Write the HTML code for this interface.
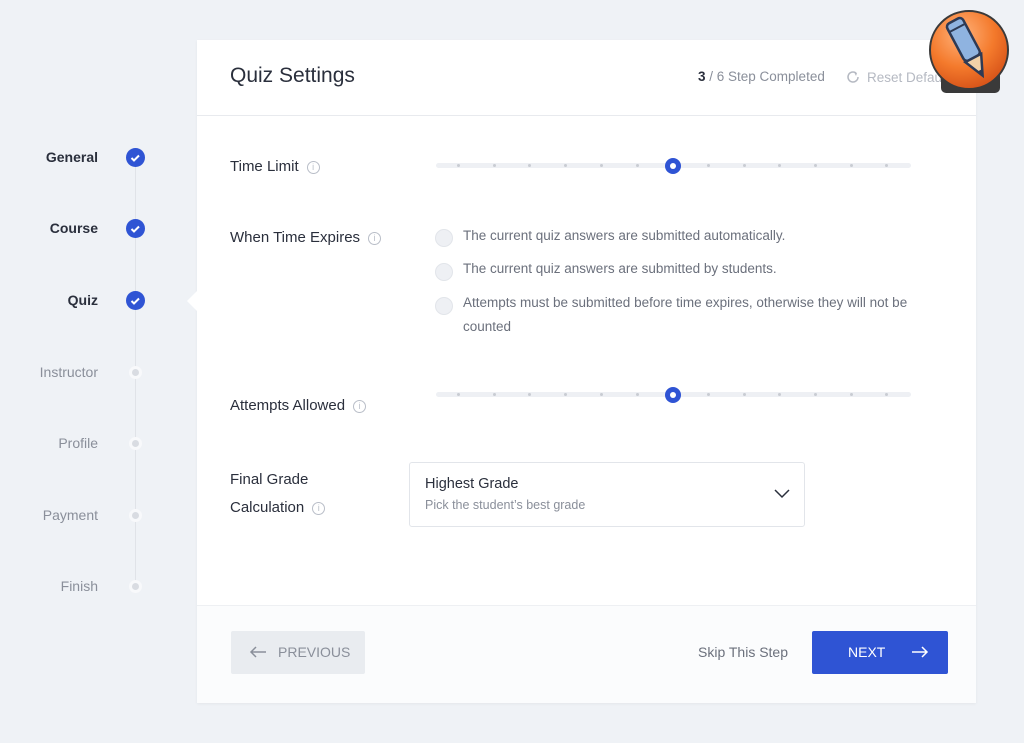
<!DOCTYPE html>
<html><head><meta charset="utf-8"><style>
*{margin:0;padding:0;box-sizing:border-box}
body{width:1024px;height:743px;background:#eff2f6;font-family:"Liberation Sans",sans-serif;position:relative;overflow:hidden}
.a{position:absolute}
.card{left:197px;top:40px;width:779px;height:663px;background:#fff;box-shadow:0 1px 3px rgba(0,0,0,.05)}
.lbl{font-size:15px;color:#2a2f3c}
.info{display:inline-block;width:13px;height:13px;border:1px solid #b9bec8;border-radius:50%;font-size:9px;color:#b9bec8;text-align:center;line-height:11px;vertical-align:1px;margin-left:8px}
.step{font-size:14px;right:926px;text-align:right;white-space:nowrap}
.dot{left:129px;width:13px;height:13px;border-radius:50%;background:#f8f9fb}
.dot:after{content:"";position:absolute;left:3px;top:3px;width:7px;height:7px;border-radius:50%;background:#d9dce2}
.track{left:436px;width:475px;height:5px;background:#eef0f4;border-radius:3px}
.tick{width:3px;height:3px;background:#c9ccd3;border-radius:50%;z-index:2}
.thumb{width:16px;height:16px;border-radius:50%;background:#2f54d4;z-index:3}
.thumb:after{content:"";position:absolute;left:5px;top:5px;width:6px;height:6px;border-radius:50%;background:#fff}
.radio{left:435px;width:18px;height:18px;border-radius:50%;background:#eef0f4;border:1px solid #e2e5ea}
.rt{left:463px;font-size:13.5px;color:#6b707c;line-height:24px}
</style></head><body>
<div class="a card"></div>
<div class="a" style="left:197px;top:115px;width:779px;height:1px;background:#e8eaee"></div>
<div class="a" style="left:197px;top:605px;width:779px;height:98px;background:#fbfcfd;border-top:1px solid #eef0f3"></div>
<div class="a" style="left:230px;top:64px;font-size:21px;color:#2a2f3c">Quiz Settings</div>
<div class="a" style="left:698px;top:69px;font-size:13.5px;color:#8a8f9a"><b style="color:#2a2f3c">3</b> / 6 Step Completed</div>
<div class="a" style="left:845px;top:69px;font-size:13.5px;color:#b5b9c2"><svg width="16" height="16" viewBox="0 0 16 16" style="vertical-align:-3px;margin-right:6px"><path d="M13 8a5 5 0 1 1-2-4" fill="none" stroke="#b5b9c2" stroke-width="1.5"/><path d="M9 3l3 1-1 3z" fill="#b5b9c2"/></svg>Reset Default</div>
<!-- sidebar -->
<div class="a" style="left:135px;top:165px;width:1px;height:425px;background:#e0e3e8"></div>
<div class="a step" style="top:149px;font-weight:bold;color:#2a2f3c">General</div>
<div class="a step" style="top:220px;font-weight:bold;color:#2a2f3c">Course</div>
<div class="a step" style="top:292px;font-weight:bold;color:#2a2f3c">Quiz</div>
<div class="a step" style="top:364px;color:#8a8f9a">Instructor</div>
<div class="a step" style="top:435px;color:#8a8f9a">Profile</div>
<div class="a step" style="top:507px;color:#8a8f9a">Payment</div>
<div class="a step" style="top:578px;color:#8a8f9a">Finish</div>
<svg class="a" style="left:126px;top:148px" width="19" height="19"><circle cx="9.5" cy="9.5" r="9.5" fill="#2f54d4"/><path d="M5.5 10l2.5 2.5 5-5" stroke="#fff" stroke-width="2" fill="none"/></svg>
<svg class="a" style="left:126px;top:219px" width="19" height="19"><circle cx="9.5" cy="9.5" r="9.5" fill="#2f54d4"/><path d="M5.5 10l2.5 2.5 5-5" stroke="#fff" stroke-width="2" fill="none"/></svg>
<svg class="a" style="left:126px;top:291px" width="19" height="19"><circle cx="9.5" cy="9.5" r="9.5" fill="#2f54d4"/><path d="M5.5 10l2.5 2.5 5-5" stroke="#fff" stroke-width="2" fill="none"/></svg>
<div class="a dot" style="top:366px"></div>
<div class="a dot" style="top:437px"></div>
<div class="a dot" style="top:509px"></div>
<div class="a dot" style="top:580px"></div>
<div class="a" style="left:187px;top:291px;width:0;height:0;border-top:10px solid transparent;border-bottom:10px solid transparent;border-right:10px solid #fff"></div>
<!-- form -->
<div class="a lbl" style="left:230px;top:158px">Time Limit<span class="info">i</span></div>
<div class="a track" style="top:163px"></div>
<div class="a lbl" style="left:230px;top:229px">When Time Expires<span class="info">i</span></div>
<div class="a radio" style="top:229px"></div><div class="a rt" style="top:224px">The current quiz answers are submitted automatically.</div>
<div class="a radio" style="top:263px"></div><div class="a rt" style="top:257px">The current quiz answers are submitted by students.</div>
<div class="a radio" style="top:297px"></div><div class="a rt" style="top:291px;width:480px">Attempts must be submitted before time expires, otherwise they will not be counted</div>
<div class="a lbl" style="left:230px;top:397px">Attempts Allowed<span class="info">i</span></div>
<div class="a track" style="top:392px"></div>
<div id="t1"></div>
<div class="a lbl" style="left:230px;top:466px;line-height:28px">Final Grade<br>Calculation<span class="info">i</span></div>
<div class="a" style="left:409px;top:462px;width:396px;height:65px;border:1px solid #e2e5ea;border-radius:3px"></div>
<div class="a" style="left:425px;top:476px;font-size:14.5px;color:#2a2f3c">Highest Grade</div>
<div class="a" style="left:425px;top:498px;font-size:12.5px;color:#8a8f9a">Pick the student’s best grade</div>
<svg class="a" style="left:774px;top:489px" width="16" height="10"><path d="M1 1l7 7 7-7" stroke="#2a2f3c" stroke-width="1.5" fill="none"/></svg>
<!-- footer -->
<div class="a" style="left:231px;top:631px;width:134px;height:43px;background:#e9ecf0;border-radius:2px;color:#8a8f9a;font-size:14px;line-height:43px;padding-left:18px"><svg width="18" height="12" style="vertical-align:-1px;margin-right:11px"><path d="M17 6H2M7 1L2 6l5 5" stroke="#8a8f9a" stroke-width="1.5" fill="none"/></svg>PREVIOUS</div>
<div class="a" style="left:698px;top:644px;font-size:14px;color:#6b707c">Skip This Step</div>
<div class="a" style="left:812px;top:631px;width:136px;height:43px;background:#2f54d4;border-radius:2px;color:#fff;font-size:14px;line-height:43px;padding-left:36px">NEXT<svg width="18" height="12" style="vertical-align:-1px;margin-left:26px"><path d="M1 6h15M11 1l5 5-5 5" stroke="#fff" stroke-width="1.5" fill="none"/></svg></div>
<!-- logo -->
<div class="a" style="left:941px;top:70px;width:59px;height:23px;background:#3a3a3a;border-radius:0 0 5px 5px"></div>
<svg class="a" style="left:928px;top:9px" width="84" height="84"><defs><radialGradient id="g" cx="40%" cy="30%" r="70%"><stop offset="0" stop-color="#ffb27a"/><stop offset=".6" stop-color="#f47a2c"/><stop offset="1" stop-color="#d9561a"/></radialGradient></defs><circle cx="41" cy="41" r="39" fill="url(#g)" stroke="#3a3a3a" stroke-width="2"/><g transform="rotate(-28 41 41)"><rect x="32" y="8" width="18" height="42" rx="4" fill="#8fb3e0" stroke="#2d3a55" stroke-width="2.5"/><line x1="32" y1="16" x2="50" y2="16" stroke="#2d3a55" stroke-width="2"/><path d="M32 50l9 20 9-20z" fill="#f2d2a8" stroke="#2d3a55" stroke-width="2.5"/><path d="M38.5 64l2.5 6 2.5-6z" fill="#2d3a55"/></g></svg>
<script>
function ticks(y){var h='';for(var i=0;i<13;i++){var x=458+i*35.7;h+='<div class="a tick" style="left:'+(x-1)+'px;top:'+(y+1)+'px"></div>';}h+='<div class="a thumb" style="left:665px;top:'+(y-5.5)+'px"></div>';return h;}
document.getElementById('t1').outerHTML=ticks(163)+ticks(392);
</script>
</body></html>
